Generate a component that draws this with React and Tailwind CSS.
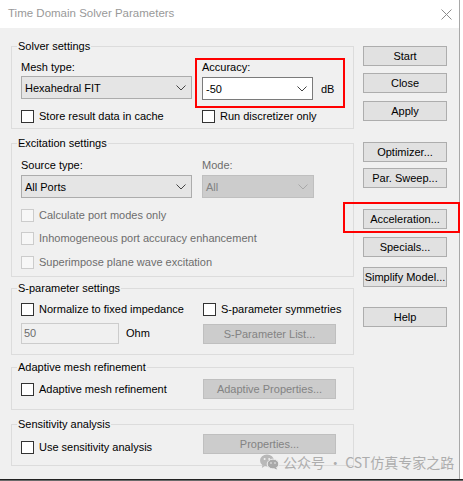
const font = { fontFamily: '"Liberation Sans", Arial, sans-serif' };

const Chevron = ({ color = "#333" }) => (
  <svg width="10" height="6" viewBox="0 0 10 6" className="shrink-0">
    <polyline points="0.5,0.5 5,5 9.5,0.5" fill="none" stroke={color} strokeWidth="1" />
  </svg>
);

const Select = ({ value, className = "", disabled = false, white = false }) => {
  const look = disabled
    ? "bg-[#cccccc] border-[#bfbfbf] text-[#838383]"
    : white
    ? "bg-white border-[#7a7a7a] text-black"
    : "bg-[#e5e5e5] border-[#acacac] text-black";
  return (
    <div className={`flex h-[23px] items-center justify-between border pl-[3px] pr-[5px] text-[11px] ${look} ${className}`}>
      <span>{value}</span>
      <Chevron color={disabled ? "#a8a8a8" : "#444"} />
    </div>
  );
};

const Check = ({ label, disabled = false, className = "" }) => (
  <div className={`flex h-[14px] items-center whitespace-nowrap text-[11px] leading-[14px] ${className}`}>
    <span
      className={`mr-[5px] h-[13px] w-[13px] shrink-0 border ${
        disabled ? "border-[#cccccc] bg-[#f7f7f7]" : "border-[#333333] bg-white"
      }`}
    />
    <span className={disabled ? "text-[#6d6d6d]" : "text-black"}>{label}</span>
  </div>
);

const Button = ({ label, className = "", disabled = false }) => (
  <div
    className={`flex h-[20px] items-center justify-center whitespace-nowrap border text-[11px] ${
      disabled ? "border-[#bfbfbf] bg-[#cccccc] text-[#838383]" : "border-[#adadad] bg-[#e1e1e1] text-black"
    } ${className}`}
  >
    {label}
  </div>
);

const Group = ({ title, className = "", children }) => (
  <fieldset className={`w-[343px] shrink-0 border border-[#dcdcdc] pl-[9px] pr-[9px] ${className}`}>
    <legend className="-ml-[4px] px-[1px] text-[11px] leading-[14px] text-black">{title}</legend>
    {children}
  </fieldset>
);

const WeChat = () => (
  <svg width="19" height="16" viewBox="0 0 19 16">
    <ellipse cx="7" cy="6.5" rx="7" ry="6" fill="#b8b8b8" />
    <path d="M2.5 11 L1.8 14 L5 12 Z" fill="#b8b8b8" />
    <circle cx="4.6" cy="5" r="1" fill="#f0f0f0" />
    <circle cx="9.2" cy="5" r="1" fill="#f0f0f0" />
    <ellipse cx="13" cy="10" rx="5.8" ry="4.9" fill="#a9a9a9" stroke="#f0f0f0" strokeWidth="1" />
    <path d="M16 13.5 L17.3 15.6 L14 14.4 Z" fill="#a9a9a9" />
    <circle cx="11" cy="9" r="0.8" fill="#f0f0f0" />
    <circle cx="15" cy="9" r="0.8" fill="#f0f0f0" />
  </svg>
);

export default function App() {
  return (
    <div className="relative h-[481px] w-[463px] overflow-hidden bg-white" style={font}>
      <div className="flex h-[479px]">
        <div className="flex w-[460px] flex-col border-r border-[#a8a8a8]">
          {/* title bar */}
          <div className="flex h-[28px] items-center justify-between bg-white pl-[8px] pr-[7px]">
            <span className="text-[11.5px] text-[#999999]">Time Domain Solver Parameters</span>
            <svg width="11" height="11" viewBox="0 0 11 11">
              <path d="M0.5 0.5 L10.5 10.5 M10.5 0.5 L0.5 10.5" stroke="#8c8c8c" strokeWidth="1" />
            </svg>
          </div>

          <div className="flex flex-1 bg-[#f0f0f0]">
            {/* left column */}
            <div className="ml-[11px] flex flex-col">
              <Group title="Solver settings" className="mt-[11px] pt-[7px] pb-[5px]">
                <div className="grid grid-cols-[171px_auto] gap-x-[10px] text-[11px] leading-[14px]">
                  <div>
                    <div>Mesh type:</div>
                    <Select value="Hexahedral FIT" className="mt-[2px] w-[171px]" />
                  </div>
                  <div>
                    <div>Accuracy:</div>
                    <div className="mt-[3px] flex items-center">
                      <Select value="-50" white className="w-[111px]" />
                      <span className="ml-[8px]">dB</span>
                    </div>
                  </div>
                </div>
                <div className="mt-[9px] grid grid-cols-[171px_auto] gap-x-[10px]">
                  <Check label="Store result data in cache" />
                  <Check label="Run discretizer only" />
                </div>
              </Group>

              <Group title="Excitation settings" className="mt-[7px] pt-[8px] pb-[7px]">
                <div className="grid grid-cols-[171px_auto] gap-x-[10px] text-[11px] leading-[14px]">
                  <div>
                    <div>Source type:</div>
                    <Select value="All Ports" className="mt-[3px] w-[171px]" />
                  </div>
                  <div>
                    <div className="text-[#6d6d6d]">Mode:</div>
                    <Select value="All" disabled className="mt-[3px] w-[112px]" />
                  </div>
                </div>
                <Check label="Calculate port modes only" disabled className="mt-[10px]" />
                <Check label="Inhomogeneous port accuracy enhancement" disabled className="mt-[9px]" />
                <Check label="Superimpose plane wave excitation" disabled className="mt-[10px]" />
              </Group>

              <Group title="S-parameter settings" className="mt-[4px] pt-[7px] pb-[10px]">
                <div className="grid grid-cols-[171px_auto] gap-x-[11px]">
                  <Check label="Normalize to fixed impedance" />
                  <Check label="S-parameter symmetries" />
                </div>
                <div className="mt-[7px] grid grid-cols-[171px_auto] items-start gap-x-[11px]">
                  <div className="flex items-center text-[11px]">
                    <div className="flex h-[21px] w-[98px] items-center border border-[#cccccc] bg-[#f0f0f0] pl-[2px] text-[#6d6d6d]">
                      50
                    </div>
                    <span className="ml-[7px]">Ohm</span>
                  </div>
                  <Button label="S-Parameter List..." disabled className="mt-[1px] w-[133px]" />
                </div>
              </Group>

              <Group title="Adaptive mesh refinement" className="mt-[5px] pt-[5px] pb-[10px]">
                <div className="grid grid-cols-[171px_auto] items-center gap-x-[11px]">
                  <Check label="Adaptive mesh refinement" />
                  <Button label="Adaptive Properties..." disabled className="w-[133px]" />
                </div>
              </Group>

              <Group title="Sensitivity analysis" className="mt-[7px] pt-[3px] pb-[11px]">
                <div className="grid grid-cols-[171px_auto] items-start gap-x-[11px]">
                  <Check label="Use sensitivity analysis" className="mt-[6px]" />
                  <Button label="Properties..." disabled className="w-[133px]" />
                </div>
              </Group>
            </div>

            {/* right column */}
            <div className="ml-[9px] flex w-[84px] flex-col pt-[18px]">
              <Button label="Start" />
              <Button label="Close" className="mt-[7px]" />
              <Button label="Apply" className="mt-[8px]" />
              <Button label="Optimizer..." className="mt-[21px]" />
              <Button label="Par. Sweep..." className="mt-[6px]" />
              <Button label="Acceleration..." className="mt-[21px]" />
              <Button label="Specials..." className="mt-[8px]" />
              <Button label="Simplify Model..." className="mt-[10px]" />
              <Button label="Help" className="mt-[20px]" />
            </div>
          </div>
        </div>
      </div>
      <div className="h-[2px] border-t border-[#222222] bg-[#6a6a6a]" />

      {/* annotation boxes */}
      <div className="pointer-events-none absolute left-[195px] top-[58px] h-[50px] w-[150px] border-2 border-[#ff0000]" />
      <div className="pointer-events-none absolute left-[343px] top-[202px] h-[31px] w-[117px] border-2 border-[#ff0000]" />

      {/* watermark */}
      <div className="pointer-events-none absolute left-[260px] top-[453px] flex items-center gap-[4px]">
        <WeChat />
        <span
          className="text-[14px] leading-[18px] text-[#adadad]"
          style={{ fontFamily: '"Noto Sans CJK SC", "Noto Sans", sans-serif' }}
        >
          公众号 · CST仿真专家之路
        </span>
      </div>
    </div>
  );
}
